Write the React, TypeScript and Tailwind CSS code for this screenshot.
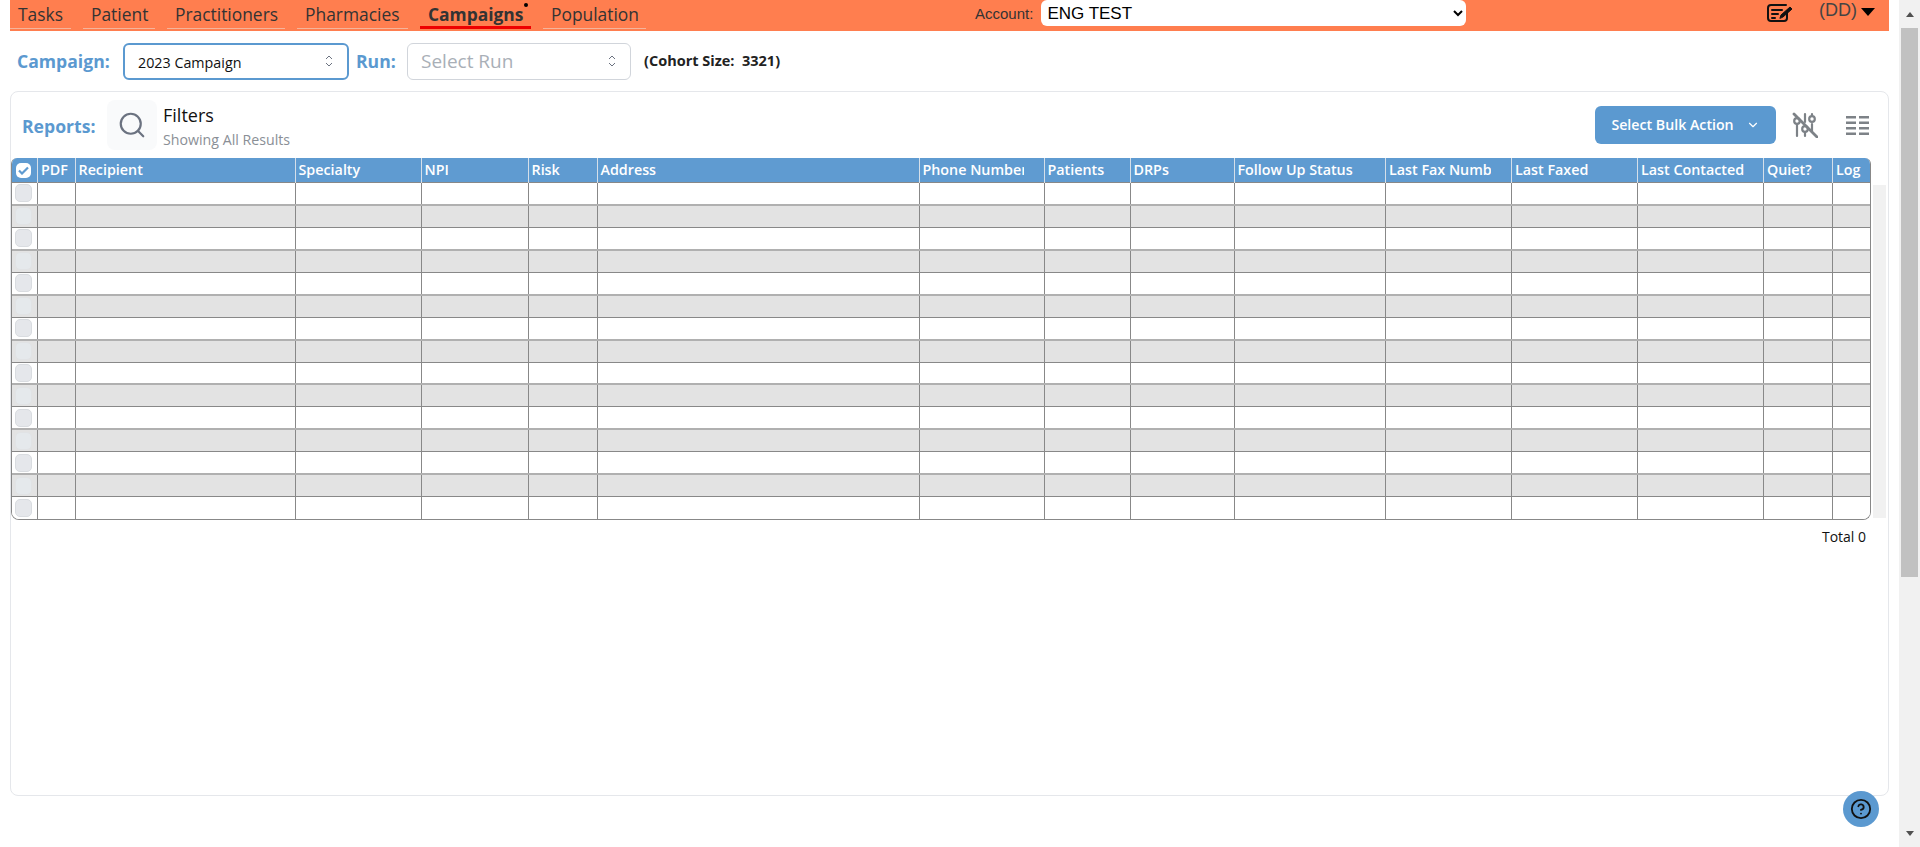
import React from 'react';
import { Search, ChevronDown, CircleHelp } from 'lucide-react';

const navItems = [
  { label: 'Tasks', width: 'w-[61px]' },
  { label: 'Patient', width: 'w-[72px]' },
  { label: 'Practitioners', width: 'w-[118px]' },
  { label: 'Pharmacies', width: 'w-[111px]' },
  { label: 'Campaigns', width: 'w-[111px]', active: true },
  { label: 'Population', width: 'w-[103px]' },
];

const columns = [
  { label: 'PDF', width: 37.5, pad: 'pr-0' },
  { label: 'Recipient', width: 220, pad: 'pr-0' },
  { label: 'Specialty', width: 126, pad: 'pr-0' },
  { label: 'NPI', width: 107, pad: 'pr-0' },
  { label: 'Risk', width: 69, pad: 'pr-0' },
  { label: 'Address', width: 322, pad: 'pr-0' },
  { label: 'Phone Number', width: 125, pad: 'mr-[20px]' },
  { label: 'Patients', width: 86, pad: 'pr-0' },
  { label: 'DRPs', width: 104, pad: 'pr-0' },
  { label: 'Follow Up Status', width: 151.5, pad: 'pr-0' },
  { label: 'Last Fax Number', width: 126, pad: 'mr-[20px]' },
  { label: 'Last Faxed', width: 126, pad: 'pr-0' },
  { label: 'Last Contacted', width: 126, pad: 'pr-0' },
  { label: 'Quiet?', width: 69, pad: 'pr-0' },
  { label: 'Log', width: 37.5, pad: 'pr-0' },
];

const rows = Array.from({ length: 15 }, (_, i) => i);

const UpDown = () => (
  <svg width="10" height="14" viewBox="0 0 10 14" fill="none" stroke="#6b7280" strokeWidth="1" className="shrink-0">
    <path d="M2 5l3-3 3 3M2 9l3 3 3-3" />
  </svg>
);

const NoteIcon = () => (
  <svg width="28" height="20" viewBox="0 0 28 20" fill="none" stroke="#111" strokeWidth="2" strokeLinecap="round" strokeLinejoin="round">
    <path d="M21 9v6a3 3 0 0 1-3 3H5a3 3 0 0 1-3-3V5a3 3 0 0 1 3-3h15" />
    <path d="M6 7h10M6 11h6M6 15h3" />
    <path d="M14 15l1-3 9-8 2 2-9 8z" fill="#111" strokeWidth="1" />
  </svg>
);

const SlidersOff = () => (
  <svg width="26" height="26" viewBox="0 0 26 26" fill="none" stroke="#7d8287" strokeWidth="2.2" strokeLinecap="round">
    <path d="M5 12v12M13 2v8M13 20v4M20 12v7M20 2v1" />
    <circle cx="5" cy="9" r="2.8" />
    <circle cx="13" cy="17" r="2.8" />
    <circle cx="20" cy="7" r="2.8" />
    <path d="M2 2l23 23" strokeWidth="2.8" />
  </svg>
);

const ColumnsIcon = () => (
  <svg width="23" height="20" viewBox="0 0 23 20" fill="#7d8287">
    {[0, 5.5, 11, 16.5].map((y) => (
      <g key={y}>
        <rect x="0" y={y} width="10" height="2.5" />
        <rect x="13" y={y} width="10" height="2.5" />
      </g>
    ))}
  </svg>
);

const Checkbox = ({ dim }: { dim: boolean }) => (
  <div className={`w-[17px] h-[18px] ml-[3px] rounded-[5px] border ${dim ? 'bg-[#e5e9ec] border-[#e1e3e5]' : 'bg-[#e5e7eb] border-[#d9dce0]'}`} />
);

const App: React.FC = () => {
  return (
    <div className="flex h-[847px] overflow-hidden bg-white font-['Open_Sans',sans-serif] text-[#111]">
      <div className="flex-1 min-w-0 px-[10px] relative">
        {/* Top bar */}
        <div className="h-[31px] bg-[#ff7e4f] flex items-start">
          <nav className="flex gap-3 h-[30px]">
            {navItems.map((item) => (
              <div
                key={item.label}
                className={`${item.width} relative h-[29px] pl-2 leading-[28px] text-[#333] whitespace-nowrap ${item.active ? 'border-b-[3px] border-[#ee0000] font-bold text-[17.4px]' : 'border-b border-[#f5b49b] text-[17.4px]'}`}
              >
                {item.label}
                {item.active && <span className="absolute right-[3px] top-[3px] w-[4px] h-[4px] rounded-full bg-black" />}
              </div>
            ))}
          </nav>
          <div className="ml-[329px] flex items-start">
            <span className="font-['Liberation_Sans',sans-serif] text-[15px] leading-[28px] text-[#333] mr-[8px]">Account:</span>
            <select className="w-[425px] h-[26px] bg-white rounded-[6px] pl-[2px] font-['Liberation_Sans',sans-serif] text-[17px] text-black outline-none">
              <option>ENG TEST</option>
            </select>
          </div>
          <div className="ml-auto flex items-start pr-[14px]">
            <div className="mt-[3px] mr-[25px]"><NoteIcon /></div>
            <span className="text-[18px] leading-[20px] text-[#444] font-['Liberation_Sans',sans-serif] font-light">(DD)</span>
            <span className="mt-[8px] ml-[4px] w-0 h-0 border-l-[7px] border-r-[7px] border-t-[8px] border-l-transparent border-r-transparent border-t-black" />
          </div>
        </div>

        {/* Campaign and run */}
        <div className="h-[60px] flex items-center pl-[7px]">
          <span className="text-[17.6px] font-bold text-[#5b99d0] w-[106px]">Campaign:</span>
          <div className="w-[226px] h-[37px] rounded-[6px] border-2 border-[#5b99d0] flex items-center justify-between pl-[13px] pr-[13px] text-[14.3px] text-[#111]">
            <span className="mt-[3px]">2023 Campaign</span>
            <UpDown />
          </div>
          <span className="ml-[7px] text-[17.6px] font-bold text-[#5b99d0] w-[51px]">Run:</span>
          <div className="w-[224px] h-[37px] rounded-[6px] border border-[#d1d5db] flex items-center justify-between pl-[13px] pr-[13px] text-[19px] text-[#a9afb7]">
            <span>Select Run</span>
            <UpDown />
          </div>
          <span className="ml-[13px] text-[14.5px] font-bold text-[#222]">(Cohort Size:&nbsp; 3321)</span>
        </div>

        {/* Reports card */}
        <div className="h-[705px] border border-[#e5e7eb] rounded-[8px]">
          <div className="h-[66px] flex items-start">
            <span className="mt-[21px] ml-[11px] text-[17.6px] font-bold text-[#5b99d0] w-[85px]">Reports:</span>
            <div className="mt-[8px] w-[50px] h-[50px] bg-[#f9fafb] rounded-[8px] flex items-center justify-center">
              <Search size={30} color="#6b7280" strokeWidth={1.75} />
            </div>
            <div className="ml-[6px] mt-[11px]">
              <div className="text-[18px] leading-[24px] text-[#111]">Filters</div>
              <div className="text-[14.2px] leading-[20px] mt-[3px] text-[#8a8f96]">Showing All Results</div>
            </div>
            <button className="ml-auto mt-[14px] w-[181px] h-[38px] rounded-[6px] bg-[#5b99d0] text-white text-[14.2px] font-semibold flex items-center justify-center gap-3">
              Select Bulk Action
              <ChevronDown size={14} color="#fff" />
            </button>
            <div className="mt-[20px] ml-[16px]"><SlidersOff /></div>
            <div className="mt-[24px] ml-[28px] mr-[19px]"><ColumnsIcon /></div>
          </div>

          <div className="flex items-start gap-[2px]">
            <div className="w-[1860px] rounded-b-[8px] rounded-t-[6px] overflow-hidden border-x border-b border-[#888]">
              <table className="w-full table-fixed border-collapse">
                <colgroup>
                  <col className="w-[25.5px]" />
                  {columns.map((c) => (
                    <col key={c.label} style={{ width: c.width }} />
                  ))}
                </colgroup>
                <thead>
                  <tr className="h-[24px] bg-[#5f9bd1]">
                    <th className="p-0">
                      <div className="w-[15px] h-[15px] ml-[4px] rounded-[5px] bg-white flex items-center justify-center">
                        <svg width="11" height="9" viewBox="0 0 11 9" fill="none" stroke="#5f9bd1" strokeWidth="2.2"><path d="M1 4.5l3 3 6-6" /></svg>
                      </div>
                    </th>
                    {columns.map((c) => (
                      <th key={c.label} className="p-0 border-l border-[#d5dfe9] text-left">
                        <div className={`${c.pad} pl-[3px] overflow-hidden whitespace-nowrap text-[14.3px] leading-[24px] font-semibold text-white`}>{c.label}</div>
                      </th>
                    ))}
                  </tr>
                </thead>
                <tbody>
                  {rows.map((i) => (
                    <tr key={i} className={`h-[22.45px] ${i % 2 ? 'bg-[#e3e3e3] border-t-2 border-[#b0b0b0]' : 'bg-white border-t border-[#888]'}`}>
                      <td className="p-0"><Checkbox dim={i % 2 === 1} /></td>
                      {columns.map((c) => (
                        <td key={c.label} className="p-0 border-l border-[#888]" />
                      ))}
                    </tr>
                  ))}
                </tbody>
              </table>
            </div>
            <div className="mt-[27px] w-[13px] h-[333px] bg-[#f1f1f1]" />
          </div>
          <div className="pr-[22px] mt-[7px] text-right text-[14px] leading-[20px] text-[#111]">Total 0</div>
        </div>

        {/* Help */}
        <button className="absolute left-[1843px] top-[791px] w-[36px] h-[36px] rounded-full bg-[#5b99d0] flex items-center justify-center">
          <CircleHelp size={22} color="#111" strokeWidth={2} />
        </button>
      </div>

      {/* Page scrollbar */}
      <div className="w-[21px] h-full bg-[#f1f1f1] flex flex-col items-center">
        <div className="h-[28px] flex items-center">
          <span className="w-0 h-0 border-l-[4px] border-r-[4px] border-b-[5px] border-l-transparent border-r-transparent border-b-[#505050]" />
        </div>
        <div className="w-[17px] h-[549px] bg-[#c1c1c1]" />
        <div className="mt-auto h-[28px] flex items-center">
          <span className="w-0 h-0 border-l-[4px] border-r-[4px] border-t-[5px] border-l-transparent border-r-transparent border-t-[#505050]" />
        </div>
      </div>
    </div>
  );
};

export default App;
